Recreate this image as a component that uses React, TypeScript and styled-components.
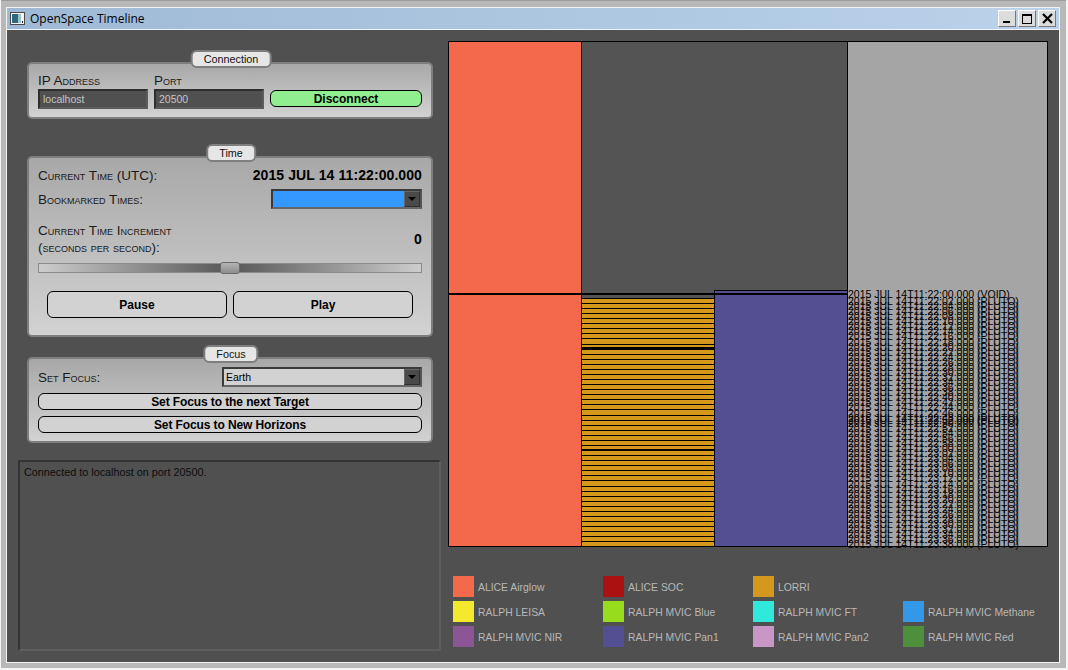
import { ReactNode } from 'react'
import styled, { createGlobalStyle } from 'styled-components'

const Global = createGlobalStyle`
  html, body { margin: 0; padding: 0; background: #f4f4f4; }
  * { box-sizing: border-box; }
  body { font-family: "Liberation Sans", Arial, sans-serif; }
`

const Frame = styled.div`
  width: 1065px;
  height: 668px;
  margin-left: 1px;
  padding: 6px 5px 5px 5px;
  background: #b8b8b8;
  border-top: 1px solid #9c9c9c;
`

const Window = styled.div`
  display: flex;
  flex-direction: column;
  width: 1054px;
  height: 656px;
  border: 1px solid #f4f4f4;
`

const TitleBar = styled.div`
  display: flex;
  align-items: center;
  height: 22px;
  padding: 0 3px;
  border-bottom: 1px solid #f0f4f8;
  background: linear-gradient(90deg, #9fbad6, #bad2ea);
`

const TitleText = styled.span`
  flex: 1;
  margin-left: 5px;
  font: 12px "Open Sans", sans-serif;
  color: #000;
`

const WinButtons = styled.div`
  display: flex;
  gap: 2px;
`

const WinButton = styled.div`
  display: flex;
  align-items: center;
  justify-content: center;
  width: 18px;
  height: 17px;
  background: #dcdcdc;
  border: 1px solid;
  border-color: #fff #777 #777 #fff;
`

const Body = styled.div`
  flex: 1;
  display: flex;
  background: #505050;
`

const LeftColumn = styled.div`
  width: 441px;
  padding: 32px 0 0 11px;
`

const Group = styled.section<{ $height: number; $top: number }>`
  position: relative;
  width: 406px;
  height: ${(p) => p.$height}px;
  margin: ${(p) => p.$top}px 0 0 9px;
  padding: 0 9px;
  border: 2px solid #7e7e7e;
  border-radius: 5px;
  background: linear-gradient(180deg, #a8a8a8, #d2d2d2);
`

const GroupTab = styled.div`
  position: absolute;
  top: -14px;
  left: 202px;
  transform: translateX(-50%);
  height: 18px;
  padding: 0 11px;
  border: 2px solid #7e7e7e;
  border-radius: 6px;
  background: #e6e6e6;
  font-size: 10.8px;
  line-height: 14px;
  color: #111;
  white-space: nowrap;
`

const FieldRow = styled.div`
  display: flex;
  align-items: flex-end;
  gap: 6px;
  padding-top: 10px;
`

const Field = styled.div`
  width: 110px;
`

const Label = styled.div`
  font-size: 13.5px;
  font-variant: small-caps;
  line-height: 15px;
  color: #1a1a1a;
  white-space: nowrap;
`

const FieldLabel = styled(Label)`
  padding-bottom: 2px;
  line-height: 13px;
`

const TextInput = styled.div`
  height: 20px;
  padding-left: 3px;
  border: 2px solid;
  border-color: #2e2e2e #5c5c5c #5c5c5c #2e2e2e;
  background: #505050;
  font-size: 10.5px;
  line-height: 17px;
  color: #c4c4c4;
`

const Pill = styled.button<{ $green?: boolean; $width?: number; $height?: number }>`
  display: block;
  width: ${(p) => (p.$width ? `${p.$width}px` : '100%')};
  height: ${(p) => p.$height ?? 17}px;
  padding: 0;
  border: 1px solid #000;
  border-radius: 6px;
  background: ${(p) => (p.$green ? '#90ee90' : '#d2d2d2')};
  font: bold 12px "Liberation Sans", Arial, sans-serif;
  color: #000;
`

const SpacedPill = styled(Pill)`
  margin-top: 6px;
  letter-spacing: -0.1px;
`

const DisconnectSlot = styled.div`
  padding-bottom: 2px;
`

const Row = styled.div<{ $height: number; $top: number }>`
  display: flex;
  align-items: center;
  justify-content: space-between;
  height: ${(p) => p.$height}px;
  margin-top: ${(p) => p.$top}px;
`

const Value = styled.span`
  font-size: 14px;
  font-weight: bold;
  letter-spacing: 0.09px;
  color: #000;
`

const TwoLine = styled(Label)`
  line-height: 17px;
`

const Combo = styled.div<{ $width: number; $fill: string }>`
  display: flex;
  width: ${(p) => p.$width}px;
  height: 20px;
  border: 2px solid #3a3a3a;
  border-right-color: #555;
  border-bottom-color: #666;
  background: ${(p) => p.$fill};
  font-size: 10.5px;
  line-height: 14px;
  color: #000;
`

const ComboText = styled.span`
  flex: 1;
  padding-left: 1px;
  border: 1px solid transparent;
`

const ComboArrow = styled.span`
  display: flex;
  align-items: center;
  justify-content: center;
  width: 16px;
  background: #4a4a4a;
  border: 1px solid;
  border-color: #666 #2e2e2e #2e2e2e #666;

  &::after {
    content: '';
    border: 4px solid transparent;
    border-top: 4px solid #000;
    border-bottom: 0;
  }
`

const SliderTrack = styled.div`
  position: relative;
  height: 10px;
  margin-top: 7px;
  border: 1px solid #8c8c8c;
  background: linear-gradient(90deg, #cdcdcd 0%, #565656 50%, #cdcdcd 100%);
`

const SliderHandle = styled.div`
  position: absolute;
  top: -2px;
  left: 181px;
  width: 20px;
  height: 12px;
  border: 1px solid #6a6a6a;
  border-radius: 3px;
  background: linear-gradient(180deg, #b4b4b4, #8e8e8e);
`

const ButtonRow = styled.div`
  display: flex;
  justify-content: center;
  gap: 6px;
  margin-top: 18px;
`

const LogBox = styled.div`
  width: 423px;
  height: 191px;
  margin-top: 17px;
  padding: 4px 4px;
  border: 2px solid;
  border-color: #333 #5e5e5e #5e5e5e #333;
  font-size: 10.8px;
  line-height: 13px;
  color: #0c0c0c;
`

const RightColumn = styled.div`
  flex: 1;
  padding: 11px 0 0 0;
`

const ChartSvg = styled.svg`
  display: block;
  overflow: visible;
  width: 600px;
  height: 506px;
  shape-rendering: crispEdges;
`

const ChartLabel = styled.text`
  font-family: "Liberation Sans", Arial, sans-serif;
  font-size: 10.5px;
  fill: #000;
`

const Legend = styled.div`
  display: grid;
  grid-template-columns: repeat(4, 150px);
  grid-auto-rows: 21px;
  row-gap: 4px;
  margin-top: 29px;
  padding-left: 5px;
`

const LegendItem = styled.div`
  display: flex;
  align-items: center;
  gap: 4px;
  font-size: 10.4px;
  color: #b8b8b8;
`

const LegendText = styled.span`
  padding-top: 2px;
`

const Swatch = styled.span<{ $color: string }>`
  width: 21px;
  height: 21px;
  background: ${(p) => p.$color};
`

const SALMON = '#f4694b'
const ORANGE = '#d4981c'
const PURPLE = '#544e93'

const legend: (([string, string]) | null)[] = [
  ['ALICE Airglow', SALMON],
  ['ALICE SOC', '#aa1212'],
  ['LORRI', ORANGE],
  null,
  ['RALPH LEISA', '#f4e92d'],
  ['RALPH MVIC Blue', '#98dc1e'],
  ['RALPH MVIC FT', '#30e8dc'],
  ['RALPH MVIC Methane', '#3498e8'],
  ['RALPH MVIC NIR', '#8b5596'],
  ['RALPH MVIC Pan1', PURPLE],
  ['RALPH MVIC Pan2', '#c897c5'],
  ['RALPH MVIC Red', '#4e8f3c'],
]

// LORRI exposures, one line per 2 seconds
const stripes = Array.from({ length: 48 }, (_, i) => Math.round(262 + i * 5.07) + 0.5)

const stamp = (seconds: number) => {
  const m = 22 + Math.floor(seconds / 60)
  const s = String(seconds % 60).padStart(2, '0')
  return `2015 JUL 14T11:${m}:${s}.000 (PLUTO)`
}

const plutoRows = Array.from({ length: 49 }, (_, i) => ({
  y: 264 + i * 5.07,
  text: stamp((i + 1) * 2),
}))

const Timeline = () => (
  <ChartSvg viewBox="0 0 600 506">
    <rect x="0.5" y="0.5" width="133" height="252" fill={SALMON} stroke="#000" />
    <rect x="133.5" y="0.5" width="266" height="252" fill="#545454" stroke="#000" />
    <rect x="0.5" y="253" width="133" height="252.5" fill={SALMON} stroke="#000" />
    <rect x="133.5" y="253" width="133" height="252.5" fill="#545454" stroke="#000" />
    <rect x="133.5" y="257.5" width="133" height="248" fill={ORANGE} stroke="#000" />
    {stripes.map((y) => (
      <line key={y} x1="133" x2="266" y1={y} y2={y} stroke="#000" strokeWidth="1" />
    ))}
    <line x1="133" x2="266" y1="307" y2="307" stroke="#000" strokeWidth="2" />
    <line x1="133" x2="266" y1="409" y2="409" stroke="#000" strokeWidth="2" />
    <rect x="266.5" y="249.5" width="133" height="256" fill={PURPLE} stroke="#000" />
    <rect x="399.5" y="0.5" width="200" height="505" fill="#a5a5a5" stroke="#000" />
    <line x1="0" x2="399" y1="253" y2="253" stroke="#000" strokeWidth="2" />
    <ChartLabel x="400" y="257">2015 JUL 14T11:22:00.000 (VOID)</ChartLabel>
    {plutoRows.map((r) => (
      <ChartLabel key={r.text} x="400" y={r.y}>
        {r.text}
      </ChartLabel>
    ))}
    <ChartLabel x="400" y="383">2015 JUL 14T11:22:52.000 (PLUTO)</ChartLabel>
  </ChartSvg>
)

const WindowIcon = () => (
  <svg width="15" height="13" viewBox="0 0 15 13">
    <rect x="0.5" y="0.5" width="14" height="12" fill="#f4f4f4" stroke="#4a4a4a" />
    <rect x="2" y="2" width="6" height="9" fill="#2d6b7c" />
    <rect x="8" y="2" width="3" height="9" fill="#9fc0c8" />
    <rect x="12" y="9" width="1" height="2" fill="#222" />
  </svg>
)

const MinGlyph = () => (
  <svg width="10" height="10" viewBox="0 0 10 10">
    <rect x="1" y="7" width="7" height="2" fill="#000" />
  </svg>
)

const MaxGlyph = () => (
  <svg width="12" height="12" viewBox="0 0 12 12">
    <rect x="1.5" y="1.5" width="9" height="9" fill="none" stroke="#000" />
    <rect x="1" y="1" width="10" height="2" fill="#000" />
  </svg>
)

const CloseGlyph = () => (
  <svg width="11" height="11" viewBox="0 0 11 11">
    <path d="M1 1 10 10M10 1 1 10" stroke="#000" strokeWidth="2.2" fill="none" />
  </svg>
)

const Panel = ({ title, height, top, children }: { title: string; height: number; top: number; children: ReactNode }) => (
  <Group $height={height} $top={top}>
    <GroupTab>{title}</GroupTab>
    {children}
  </Group>
)

export default function App() {
  return (
    <>
      <Global />
      <Frame>
        <Window>
          <TitleBar>
            <WindowIcon />
            <TitleText>OpenSpace Timeline</TitleText>
            <WinButtons>
              <WinButton><MinGlyph /></WinButton>
              <WinButton><MaxGlyph /></WinButton>
              <WinButton><CloseGlyph /></WinButton>
            </WinButtons>
          </TitleBar>
          <Body>
            <LeftColumn>
              <Panel title="Connection" height={57} top={0}>
                <FieldRow>
                  <Field>
                    <FieldLabel>IP Address</FieldLabel>
                    <TextInput>localhost</TextInput>
                  </Field>
                  <Field>
                    <FieldLabel>Port</FieldLabel>
                    <TextInput>20500</TextInput>
                  </Field>
                  <DisconnectSlot>
                    <Pill $green $width={152}>Disconnect</Pill>
                  </DisconnectSlot>
                </FieldRow>
              </Panel>
              <Panel title="Time" height={181} top={37}>
                <Row $height={20} $top={7}>
                  <Label>Current Time (UTC):</Label>
                  <Value>2015 JUL 14 11:22:00.000</Value>
                </Row>
                <Row $height={20} $top={4}>
                  <Label>Bookmarked Times:</Label>
                  <Combo $width={151} $fill="#3399ff">
                    <ComboText />
                    <ComboArrow />
                  </Combo>
                </Row>
                <Row $height={34} $top={13}>
                  <TwoLine>
                    Current Time Increment
                    <br />
                    (seconds per second):
                  </TwoLine>
                  <Value>0</Value>
                </Row>
                <SliderTrack>
                  <SliderHandle />
                </SliderTrack>
                <ButtonRow>
                  <Pill $width={180} $height={27}>Pause</Pill>
                  <Pill $width={180} $height={27}>Play</Pill>
                </ButtonRow>
              </Panel>
              <Panel title="Focus" height={86} top={20}>
                <Row $height={20} $top={8}>
                  <Label>Set Focus:</Label>
                  <Combo $width={200} $fill="#d2d2d2">
                    <ComboText>Earth</ComboText>
                    <ComboArrow />
                  </Combo>
                </Row>
                <SpacedPill>Set Focus to the next Target</SpacedPill>
                <SpacedPill>Set Focus to New Horizons</SpacedPill>
              </Panel>
              <LogBox>Connected to localhost on port 20500.</LogBox>
            </LeftColumn>
            <RightColumn>
              <Timeline />
              <Legend>
                {legend.map((item, i) =>
                  item ? (
                    <LegendItem key={item[0]}>
                      <Swatch $color={item[1]} />
                      <LegendText>{item[0]}</LegendText>
                    </LegendItem>
                  ) : (
                    <span key={i} />
                  ),
                )}
              </Legend>
            </RightColumn>
          </Body>
        </Window>
      </Frame>
    </>
  )
}
